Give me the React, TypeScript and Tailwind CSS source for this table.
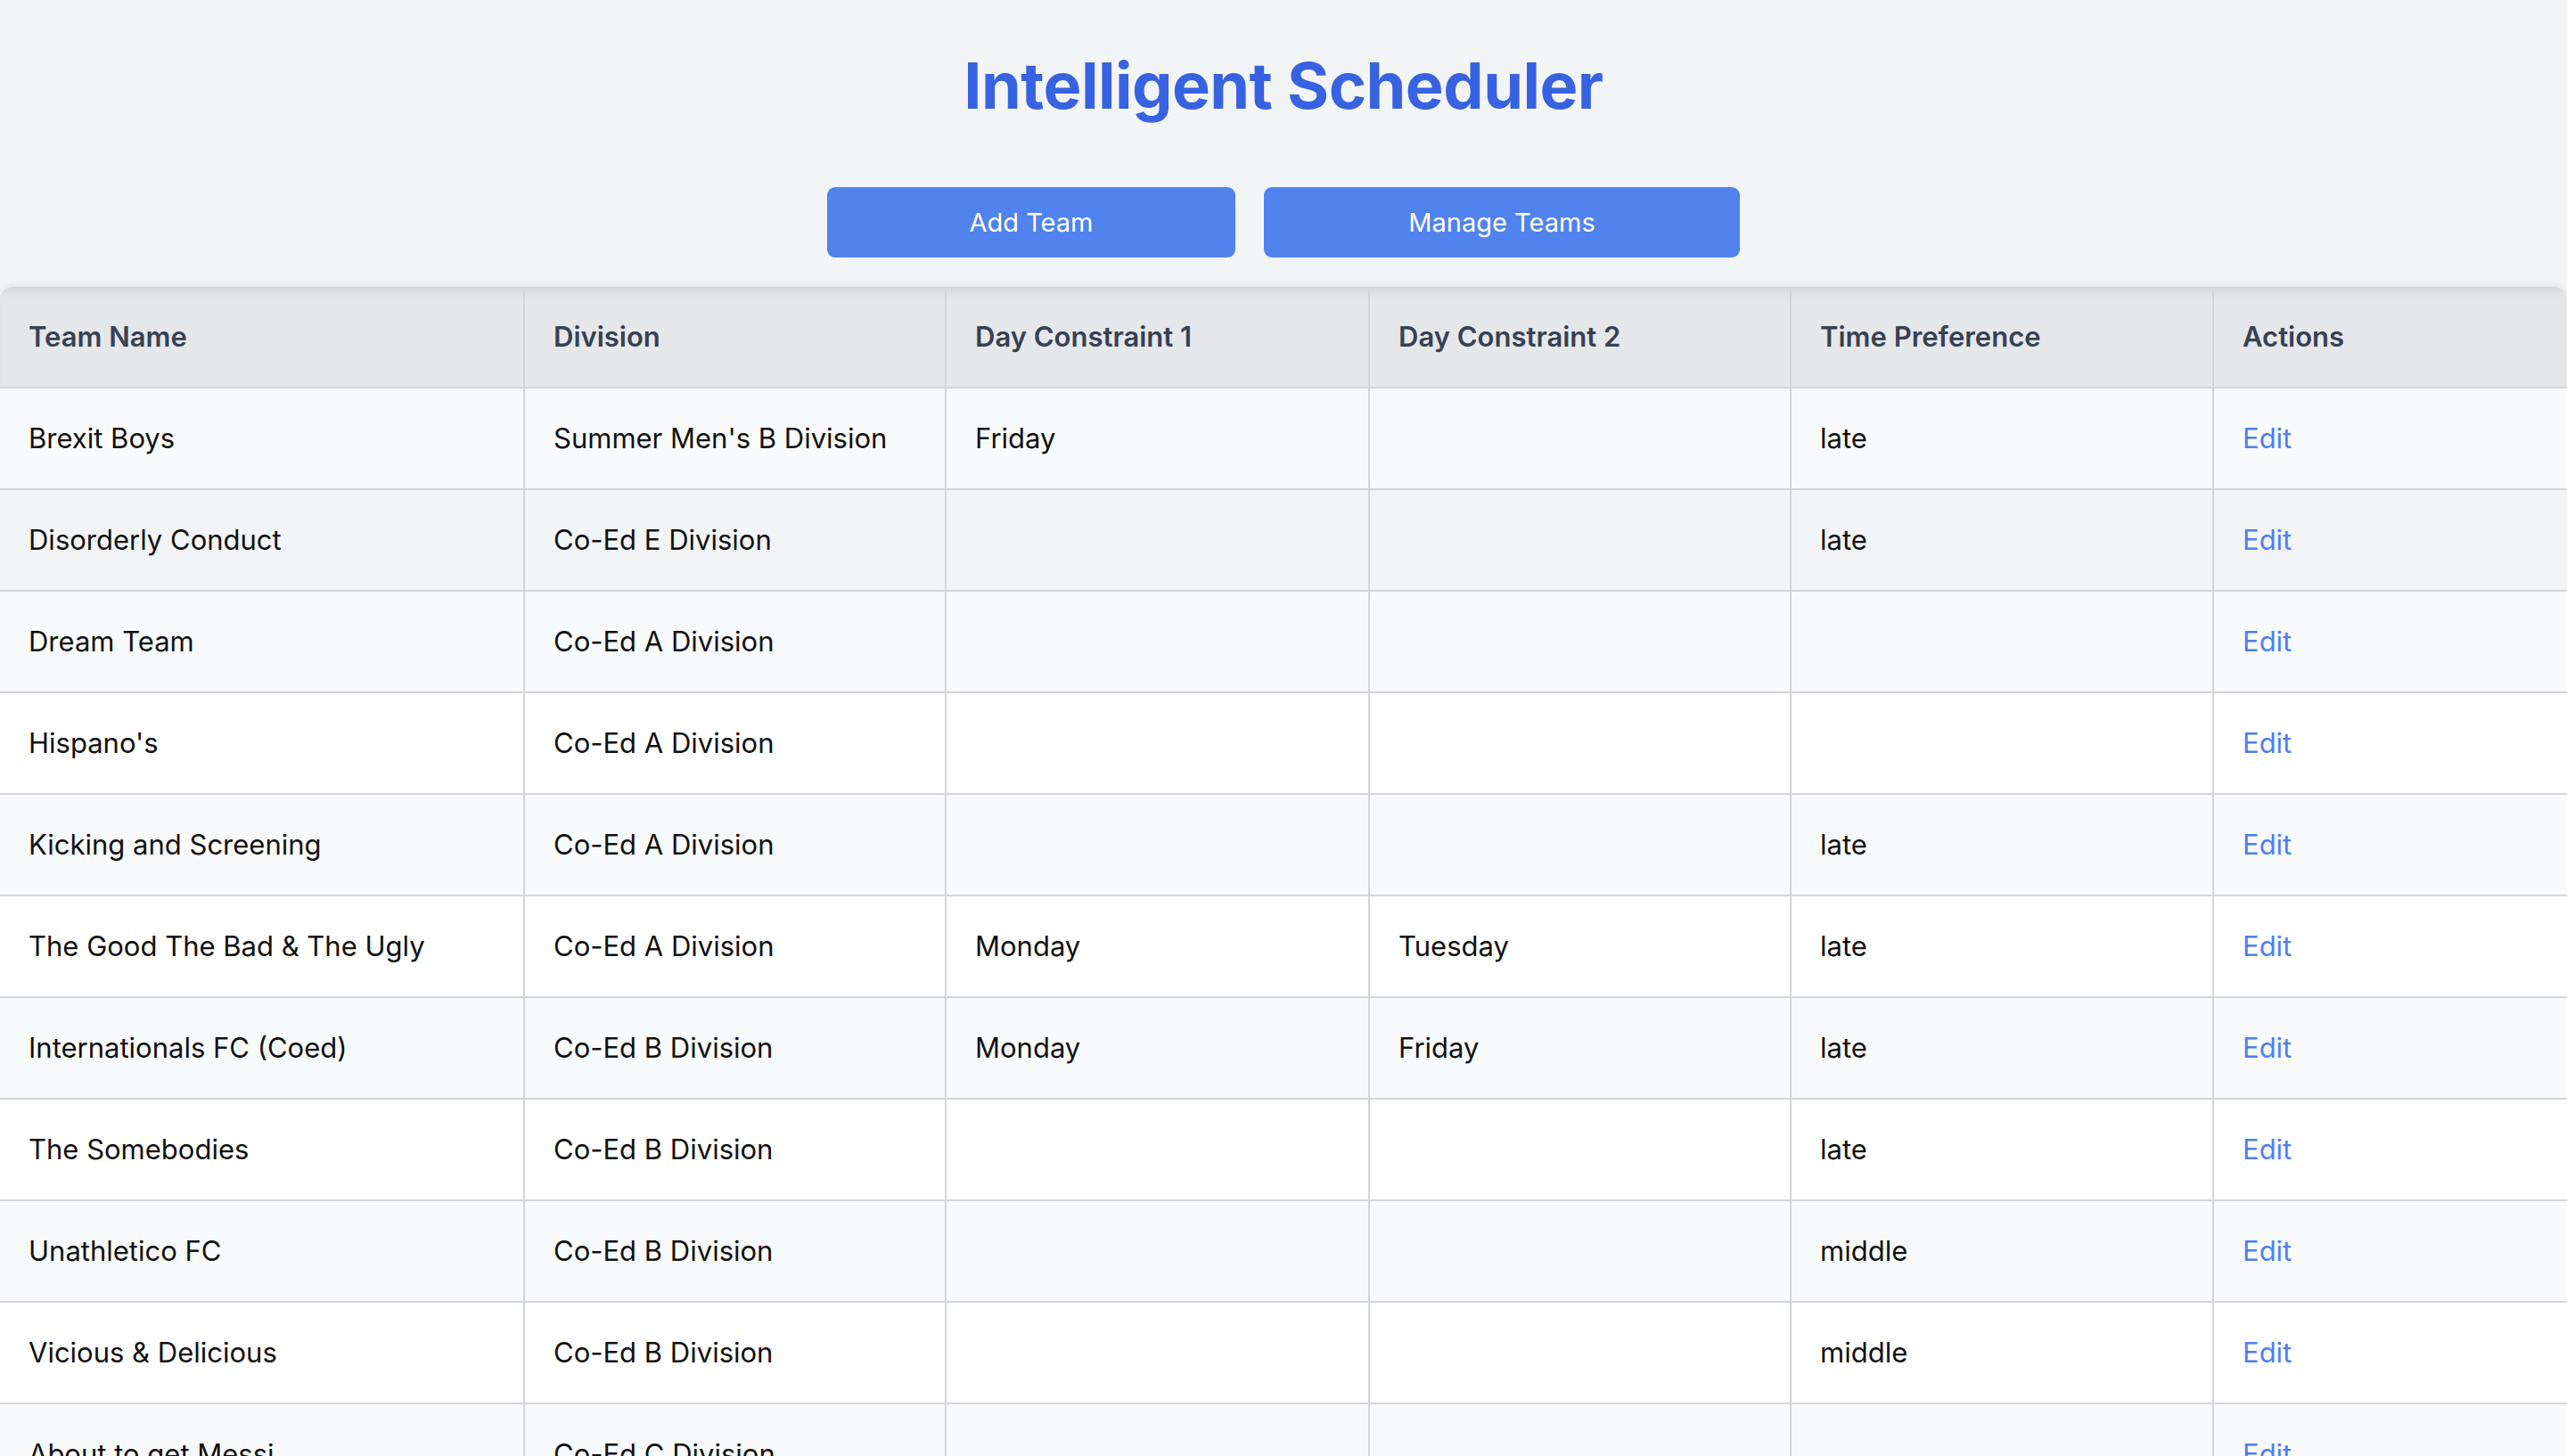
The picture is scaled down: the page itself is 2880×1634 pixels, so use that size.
import React from "react";

type Team = {
  name: string;
  division: string;
  day1: string;
  day2: string;
  time: string;
};

const teams: Team[] = [
  { name: "Brexit Boys", division: "Summer Men's B Division", day1: "Friday", day2: "", time: "late" },
  { name: "Disorderly Conduct", division: "Co-Ed E Division", day1: "", day2: "", time: "late" },
  { name: "Dream Team", division: "Co-Ed A Division", day1: "", day2: "", time: "" },
  { name: "Hispano's", division: "Co-Ed A Division", day1: "", day2: "", time: "" },
  { name: "Kicking and Screening", division: "Co-Ed A Division", day1: "", day2: "", time: "late" },
  { name: "The Good The Bad & The Ugly", division: "Co-Ed A Division", day1: "Monday", day2: "Tuesday", time: "late" },
  { name: "Internationals FC (Coed)", division: "Co-Ed B Division", day1: "Monday", day2: "Friday", time: "late" },
  { name: "The Somebodies", division: "Co-Ed B Division", day1: "", day2: "", time: "late" },
  { name: "Unathletico FC", division: "Co-Ed B Division", day1: "", day2: "", time: "middle" },
  { name: "Vicious & Delicious", division: "Co-Ed B Division", day1: "", day2: "", time: "middle" },
  { name: "About to get Messi", division: "Co-Ed C Division", day1: "", day2: "", time: "" },
];

const headers = ["Team Name", "Division", "Day Constraint 1", "Day Constraint 2", "Time Preference", "Actions"];

function rowBg(i: number) {
  if (i === 1) return "bg-[#f3f4f6]";
  return i % 2 === 0 ? "bg-[#f9fafb]" : "bg-white";
}

export default function App() {
  return (
    <div
      className="h-[1634px] overflow-hidden bg-[#f3f4f6]"
      style={{ fontFamily: "Inter, 'Noto Sans', sans-serif" }}
    >
      <h1 className="pt-[60px] text-center text-[72px] font-bold leading-[72px] tracking-[-0.5px] text-[#3762e1]">
        Intelligent Scheduler
      </h1>

      <div className="mt-[78px] flex justify-center gap-[32px]">
        <button className="h-[79px] w-[458px] rounded-[9px] bg-[#5083ed] text-[29px] text-white">Add Team</button>
        <button className="h-[79px] w-[534px] rounded-[9px] bg-[#5083ed] text-[29px] text-white">Manage Teams</button>
      </div>

      <div className="mt-[33px] overflow-hidden rounded-t-[14px] shadow-[0_-2px_10px_rgba(0,0,0,0.06)]">
        <table className="w-full table-fixed border-collapse text-[31px]">
          <colgroup>
            <col className="w-[588px]" />
            <col className="w-[473px]" />
            <col className="w-[475px]" />
            <col className="w-[473px]" />
            <col className="w-[474px]" />
            <col />
          </colgroup>
          <thead>
            <tr className="bg-[#e5e7eb] shadow-[inset_0_10px_12px_-8px_rgba(0,0,0,0.12)]">
              {headers.map((h, i) => (
                <th
                  key={h}
                  className={
                    "h-[113px] border-b-2 border-[#d4d5da] px-[32px] text-left font-semibold text-[#374151] " +
                    (i < headers.length - 1 ? "border-r-2" : "")
                  }
                >
                  {h}
                </th>
              ))}
            </tr>
          </thead>
          <tbody>
            {teams.map((t, i) => (
              <tr key={t.name} className={rowBg(i) + " text-[#111111]"}>
                <Cell>{t.name}</Cell>
                <Cell>{t.division}</Cell>
                <Cell>{t.day1}</Cell>
                <Cell>{t.day2}</Cell>
                <Cell>{t.time}</Cell>
                <td className="h-[114px] border-b-2 border-[#d4d5da] px-[32px]">
                  <a className="cursor-pointer text-[#4d80ef]">Edit</a>
                </td>
              </tr>
            ))}
          </tbody>
        </table>
      </div>
    </div>
  );
}

function Cell({ children }: { children: React.ReactNode }) {
  return <td className="h-[114px] border-r-2 border-b-2 border-[#d4d5da] px-[32px]">{children}</td>;
}
